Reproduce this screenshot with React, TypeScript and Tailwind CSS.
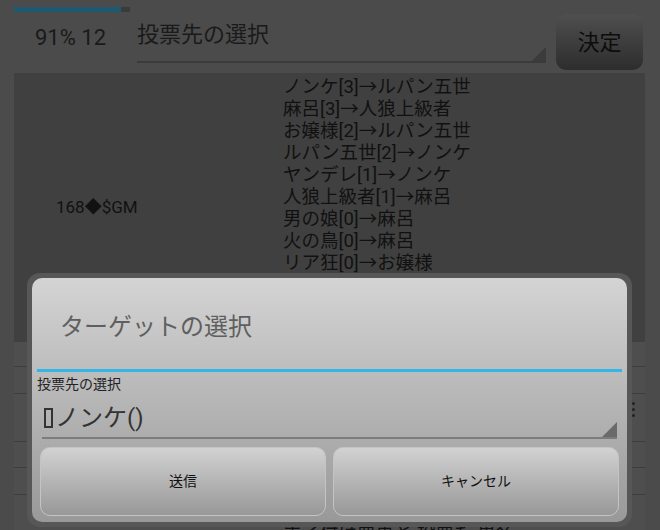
import React from "react";

const logLines = [
  "ノンケ[3]→ルパン五世",
  "麻呂[3]→人狼上級者",
  "お嬢様[2]→ルパン五世",
  "ルパン五世[2]→ノンケ",
  "ヤンデレ[1]→ノンケ",
  "人狼上級者[1]→麻呂",
  "男の娘[0]→麻呂",
  "火の鳥[0]→麻呂",
  "リア狂[0]→お嬢様",
  "ノンケ[0]→ヤンデレ",
  "麻呂[0]→火の鳥",
  "お嬢様[0]→男の娘",
];

function Corner({ size, color }: { size: number; color: string }) {
  return (
    <svg width={size} height={size} viewBox={`0 0 ${size} ${size}`} className="absolute bottom-0 right-0">
      <polygon points={`${size},0 ${size},${size} 0,${size}`} fill={color} />
    </svg>
  );
}

export default function App() {
  return (
    <div className="relative h-[530px] w-[660px] overflow-hidden bg-[#4b4b4b] font-[family-name:Roboto,'Noto_Sans_CJK_JP',sans-serif] text-[#111]">
      {/* top bar */}
      <div className="flex h-[73px] pl-[14px]">
        <div className="w-[116px] pt-[7px]">
          <div className="h-[5px] bg-[#3b3b3b]">
            <div className="h-full w-[107px] bg-[#1d5a70]" />
          </div>
          <p className="mt-[15px] pl-[21px] text-[22px] leading-[22px] text-[#1a1a1a]">91% 12</p>
        </div>
        <div className="relative ml-[7px] h-[63px] w-[409px] border-b-2 border-[#3b3b3b] pt-[24px]">
          <p className="text-[22px] leading-[22px] text-[#1a1a1a]">投票先の選択</p>
          <Corner size={14} color="#3b3b3b" />
        </div>
        <button className="ml-[10px] mt-[14px] h-[56px] w-[87px] rounded-[10px] bg-gradient-to-b from-[#4f4f4f] to-[#2d2d2d] text-[22px] text-[#0d0d0d]">
          決定
        </button>
      </div>

      {/* vote log */}
      <div className="mr-[15px] ml-[14px] flex h-[269px] items-center bg-[#404040]">
        <div className="w-[269px] pl-[42px] text-[17px] text-[#111]">168◆$GM</div>
        <div className="flex flex-col text-[18.5px] leading-[22px] text-[#111]">
          {logLines.map((line, i) => (
            <span key={i}>{line}</span>
          ))}
        </div>
      </div>

      {/* list rows */}
      <div className="mr-[15px] ml-[14px] flex flex-col bg-[#4e4e4e]">
        <div className="h-[25px] border-b border-[#3d3d3d]" />
        <div className="h-[27px] border-b border-[#3d3d3d]" />
        <div className="flex h-[48px] justify-end border-b border-[#3d3d3d] pt-[8px] pr-[10px]">
          <div className="flex flex-col gap-[3px]">
            <span className="h-[3px] w-[3px] rounded-full bg-[#222]" />
            <span className="h-[3px] w-[3px] rounded-full bg-[#222]" />
            <span className="h-[3px] w-[3px] rounded-full bg-[#222]" />
          </div>
        </div>
        <div className="h-[26px] border-b border-[#3d3d3d]" />
        <div className="h-[27px] border-b border-[#3d3d3d]" />
        <div className="h-[60px] pt-[27px] pl-[269px] text-[18.5px] leading-[22px] text-[#111]">ホイ付け票再と 投票た 男名</div>
      </div>

      {/* dialog */}
      <div className="absolute top-[273px] left-[27px] h-[254px] w-[605px] rounded-[13px] bg-[#575757] p-[5px]">
        <div className="flex h-full flex-col rounded-[10px] bg-gradient-to-b from-[#d4d4d4] to-[#999]">
          <div className="h-[91px] pt-[37px] pl-[28px] text-[24px] leading-[24px] text-[#5f5f5f]">ターゲットの選択</div>
          <div className="mx-[5px] h-[3px] bg-[#33b5e5]" />
          <p className="mt-[4px] px-[5px] text-[14px] leading-[16px] text-[#222]">投票先の選択</p>
          <div className="relative mx-[10px] mt-[3px] flex h-[44px] items-end border-b-2 border-[#7c7c7c] pb-[7px] pl-[2px]">
            <span className="flex items-center text-[24px] leading-[24px] text-[#333]">
              <span className="mr-[2px] inline-block h-[20px] w-[9px] border-2 border-[#333]" />
              ノンケ()
            </span>
            <Corner size={15} color="#6a6a6a" />
          </div>
          <div className="mt-[8px] flex gap-[7px] px-[8px]">
            <button className="h-[69px] flex-1 rounded-[10px] border border-[#c4c4c4] bg-gradient-to-b from-[#d2d2d2] to-[#989898] text-[14px] text-[#111]">
              送信
            </button>
            <button className="h-[69px] flex-1 rounded-[10px] border border-[#c4c4c4] bg-gradient-to-b from-[#d2d2d2] to-[#989898] text-[14px] text-[#111]">
              キャンセル
            </button>
          </div>
        </div>
      </div>
    </div>
  );
}
